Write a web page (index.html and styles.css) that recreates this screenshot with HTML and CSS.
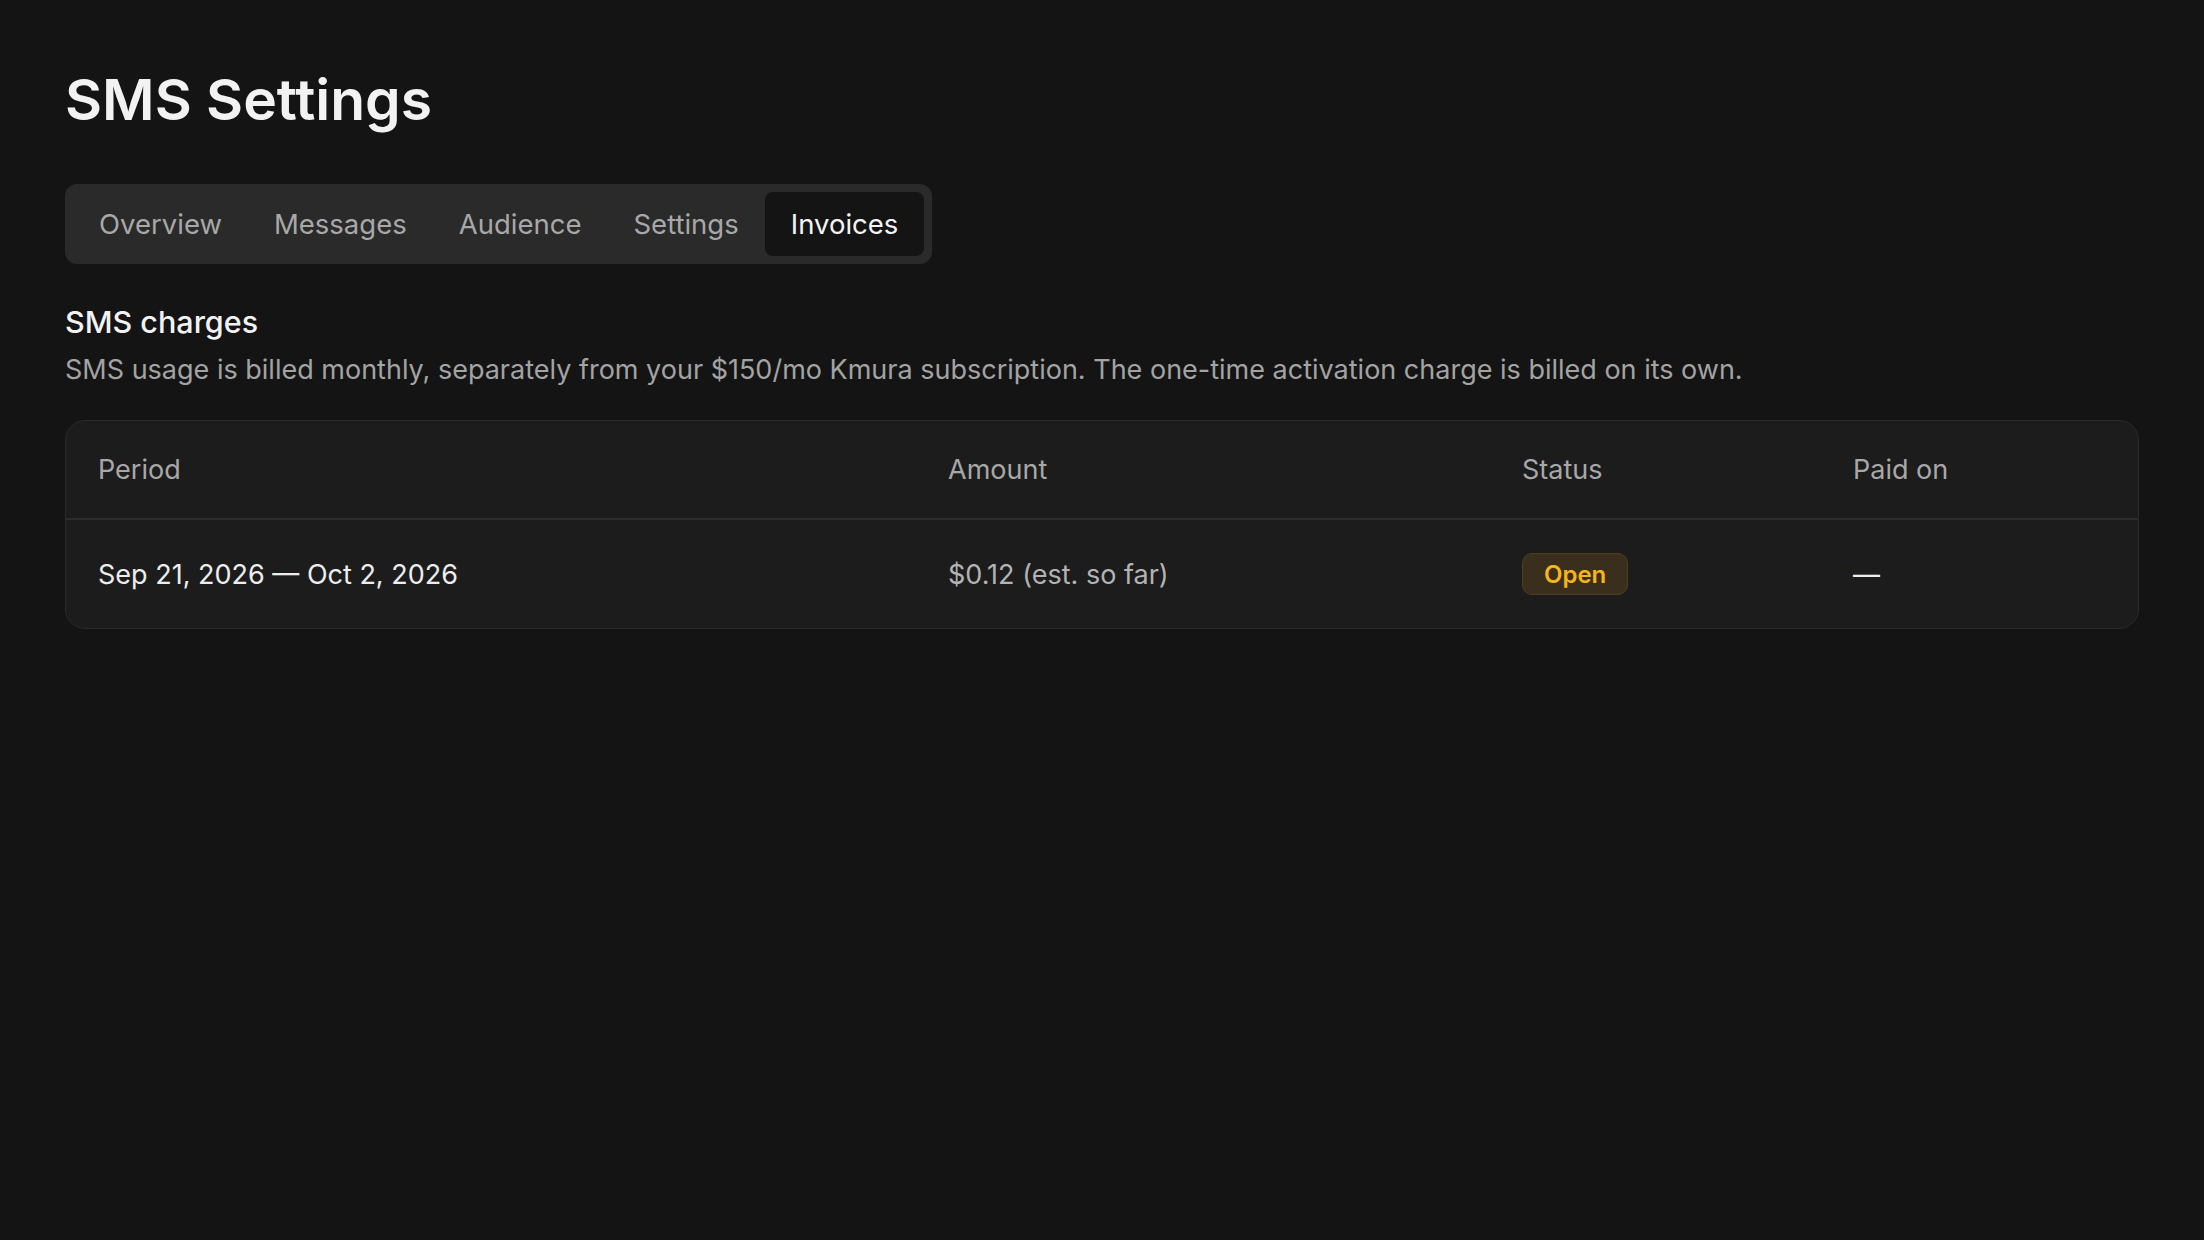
FILE: index.html
```html
<!DOCTYPE html>
<html lang="en">
<head>
    <meta charset="UTF-8">
    <meta name="viewport" content="width=device-width, initial-scale=1.0">
    <title>SMS Settings</title>
    <link rel="stylesheet" href="styles.css">
</head>
<body>
    <div class="page">
        <h1 class="page-title">SMS Settings</h1>

        <nav class="tabs">
            <a class="tab">Overview</a>
            <a class="tab">Messages</a>
            <a class="tab">Audience</a>
            <a class="tab">Settings</a>
            <a class="tab tab--active">Invoices</a>
        </nav>

        <section class="charges">
            <h2 class="charges-title">SMS charges</h2>
            <p class="charges-desc">SMS usage is billed monthly, separately from your $150/mo Kmura subscription. The one-time activation charge is billed on its own.</p>

            <div class="invoice-table">
                <div class="invoice-row invoice-row--head">
                    <div class="cell">Period</div>
                    <div class="cell">Amount</div>
                    <div class="cell">Status</div>
                    <div class="cell">Paid on</div>
                </div>
                <div class="invoice-row">
                    <div class="cell cell--period">Sep 21, 2026 — Oct 2, 2026</div>
                    <div class="cell cell--amount">$0.12 (est. so far)</div>
                    <div class="cell"><span class="badge badge--open">Open</span></div>
                    <div class="cell cell--paid">—</div>
                </div>
            </div>
        </section>
    </div>
</body>
</html>
```

FILE: styles.css
```css
body {
    margin: 0;
    background: #141414;
    color: #f0f0f0;
    font-family: 'Inter', 'Noto Sans', sans-serif;
}

.page {
    padding: 66px 65px;
}

.page-title {
    margin: 0;
    font-size: 57px;
    font-weight: 600;
    line-height: 1.2;
    color: #f2f2f2;
}

.tabs {
    display: inline-flex;
    margin-top: 50px;
    padding: 8px;
    background: #2a2a2a;
    border-radius: 12px;
}

.tab {
    display: flex;
    align-items: center;
    height: 64px;
    padding: 0 26px;
    font-size: 27.5px;
    color: #a8a8a8;
    border-radius: 8px;
    cursor: pointer;
}

.tab--active {
    background: #141414;
    color: #f4f4f4;
}

.charges {
    margin-top: 40px;
}

.charges-title {
    margin: 0;
    font-size: 30.5px;
    font-weight: 500;
    line-height: 1.2;
    color: #f2f2f2;
}

.charges-desc {
    margin: 13px 0 0;
    font-size: 27px;
    line-height: 1.2;
    color: #a3a3a3;
}

.invoice-table {
    margin-top: 34px;
    background: #1c1c1c;
    border: 1px solid #2a2a2a;
    border-radius: 20px;
    overflow: hidden;
}

.invoice-row {
    display: grid;
    grid-template-columns: 850px 574px 331px 1fr;
    align-items: center;
    padding: 33px 32px;
    font-size: 27px;
    line-height: 1.15;
}

.invoice-row--head {
    border-bottom: 2px solid #2c2c2c;
    color: #a8a8a8;
}

.cell--period {
    color: #ededed;
}

.cell--amount {
    color: #b3b3b3;
}

.cell--paid {
    color: #ededed;
}

.badge {
    display: inline-flex;
    align-items: center;
    height: 40px;
    padding: 0 21px;
    border-radius: 10px;
    font-size: 24px;
    font-weight: 600;
}

.badge--open {
    background: #3a2f1c;
    border: 1px solid #4f3f22;
    color: #f5b61b;
}
```
